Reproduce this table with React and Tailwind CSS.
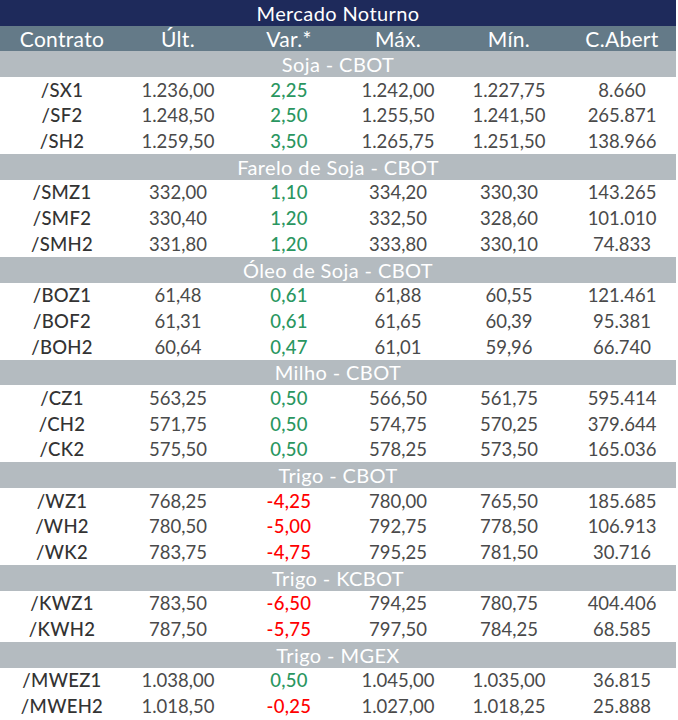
import React from 'react';

const grupos = [
    {
        nome: 'Soja - CBOT',
        linhas: [
            ['/SX1', '1.236,00', '2,25', '1.242,00', '1.227,75', '8.660'],
            ['/SF2', '1.248,50', '2,50', '1.255,50', '1.241,50', '265.871'],
            ['/SH2', '1.259,50', '3,50', '1.265,75', '1.251,50', '138.966'],
        ],
    },
    {
        nome: 'Farelo de Soja - CBOT',
        linhas: [
            ['/SMZ1', '332,00', '1,10', '334,20', '330,30', '143.265'],
            ['/SMF2', '330,40', '1,20', '332,50', '328,60', '101.010'],
            ['/SMH2', '331,80', '1,20', '333,80', '330,10', '74.833'],
        ],
    },
    {
        nome: 'Óleo de Soja - CBOT',
        linhas: [
            ['/BOZ1', '61,48', '0,61', '61,88', '60,55', '121.461'],
            ['/BOF2', '61,31', '0,61', '61,65', '60,39', '95.381'],
            ['/BOH2', '60,64', '0,47', '61,01', '59,96', '66.740'],
        ],
    },
    {
        nome: 'Milho - CBOT',
        linhas: [
            ['/CZ1', '563,25', '0,50', '566,50', '561,75', '595.414'],
            ['/CH2', '571,75', '0,50', '574,75', '570,25', '379.644'],
            ['/CK2', '575,50', '0,50', '578,25', '573,50', '165.036'],
        ],
    },
    {
        nome: 'Trigo - CBOT',
        linhas: [
            ['/WZ1', '768,25', '-4,25', '780,00', '765,50', '185.685'],
            ['/WH2', '780,50', '-5,00', '792,75', '778,50', '106.913'],
            ['/WK2', '783,75', '-4,75', '795,25', '781,50', '30.716'],
        ],
    },
    {
        nome: 'Trigo - KCBOT',
        linhas: [
            ['/KWZ1', '783,50', '-6,50', '794,25', '780,75', '404.406'],
            ['/KWH2', '787,50', '-5,75', '797,50', '784,25', '68.585'],
        ],
    },
    {
        nome: 'Trigo - MGEX',
        linhas: [
            ['/MWEZ1', '1.038,00', '0,50', '1.045,00', '1.035,00', '36.815'],
            ['/MWEH2', '1.018,50', '-0,25', '1.027,00', '1.018,25', '25.888'],
        ],
    },
];

const colunas = ['Contrato', 'Últ.', 'Var.*', 'Máx.', 'Mín.', 'C.Abert'];
const cols = 'grid grid-cols-[124px_108px_114px_104px_118px_108px]';

function Linha({linha}) {
    return (
        <div className={cols + ' h-[25.7px] items-center bg-white text-[18.5px]'}>
            {linha.map((v, i) => {
                let cls = 'text-center text-[#4a4a4a]';
                if (i === 0) cls = 'text-center text-[#333] font-medium tracking-[0.3px]';
                if (i === 2) cls = 'text-center font-medium tracking-[0.3px] ' + (v.startsWith('-') ? 'text-[#ff0000]' : 'text-[#2a9660]');
                return <div key={i} className={cls}>{v}</div>;
            })}
        </div>
    );
}

export default function App() {
    return (
        <div className="w-[678px] h-[720px] bg-white pr-[2px] text-[20px] leading-none" style={{fontFamily: 'Lato, "Open Sans", sans-serif'}}>
            <div className="h-[25.7px] bg-[#1e2a5b] text-white flex items-center justify-center tracking-[0.4px]">Mercado Noturno</div>
            <div className={cols + ' h-[25.7px] bg-[#647a88] text-white items-center text-[21px]'}>
                {colunas.map(c => <div key={c} className="text-center tracking-[0.3px]">{c}</div>)}
            </div>
            {grupos.map(g => (
                <div key={g.nome}>
                    <div className="h-[25.7px] bg-[#b4bbc0] text-white flex items-center justify-center tracking-[0.4px]">{g.nome}</div>
                    {g.linhas.map(l => <Linha key={l[0]} linha={l}/>)}
                </div>
            ))}
        </div>
    );
}
